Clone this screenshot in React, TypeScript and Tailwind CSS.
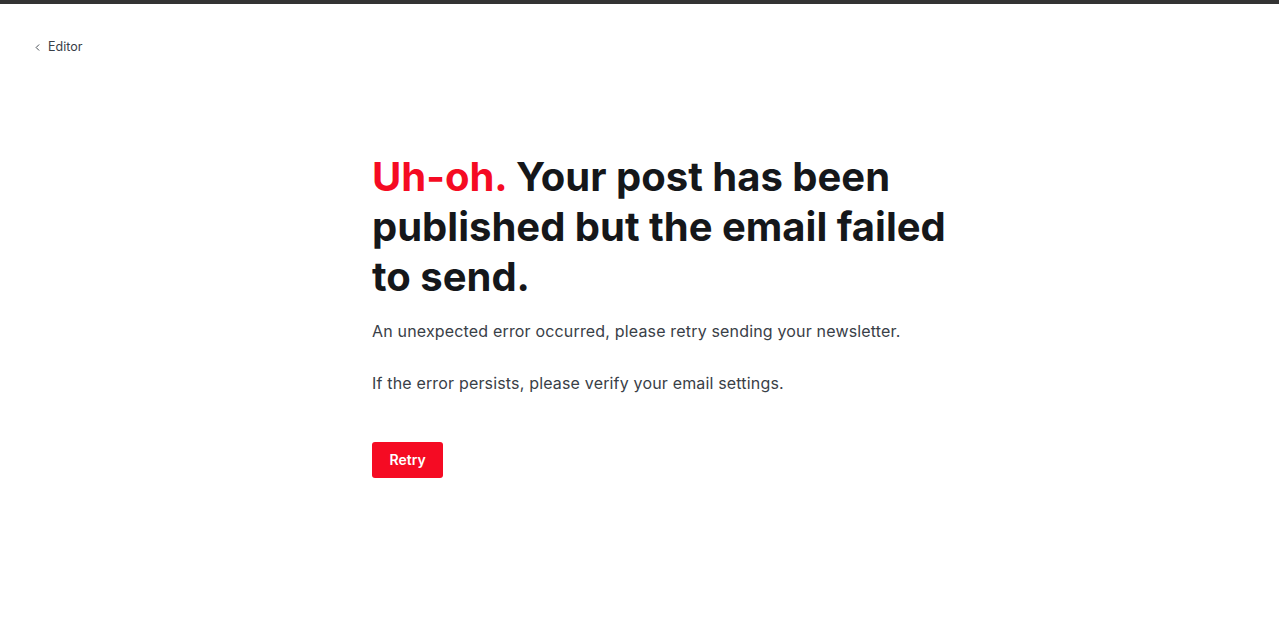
import { ChevronLeft } from 'lucide-react';

export default function App() {
  return (
    <div
      className="min-h-[639px] bg-white text-[#15171a]"
      style={{ fontFamily: 'Inter, "Noto Sans", sans-serif' }}
    >
      <div className="h-[4px] bg-[#333333]" />
      <div className="px-[32px] pt-[34px]">
        <a href="#" className="flex items-center gap-[5px] text-[12.5px] text-[#394047]">
          <ChevronLeft className="h-[11px] w-[11px]" strokeWidth={2} />
          <span>Editor</span>
        </a>
      </div>
      <main className="pl-[372px] pt-[95px]">
        <div className="w-[600px]">
          <h1 className="text-[40px] font-bold leading-[50px] tracking-normal">
            <span className="text-[#f50b23]">Uh-oh.</span> Your post has been published but the email failed to send.
          </h1>
          <p className="mt-[16px] text-[16px] leading-[26px] tracking-[0.17px] text-[#394047]">
            An unexpected error occurred, please retry sending your newsletter.
          </p>
          <p className="mt-[26px] text-[16px] leading-[26px] tracking-[0.17px] text-[#394047]">
            If the error persists, please verify your email settings.
          </p>
          <button className="mt-[46px] h-[36px] rounded-[3px] bg-[#f50b23] px-[17.5px] text-[14px] font-semibold text-white">
            Retry
          </button>
        </div>
      </main>
    </div>
  );
}
